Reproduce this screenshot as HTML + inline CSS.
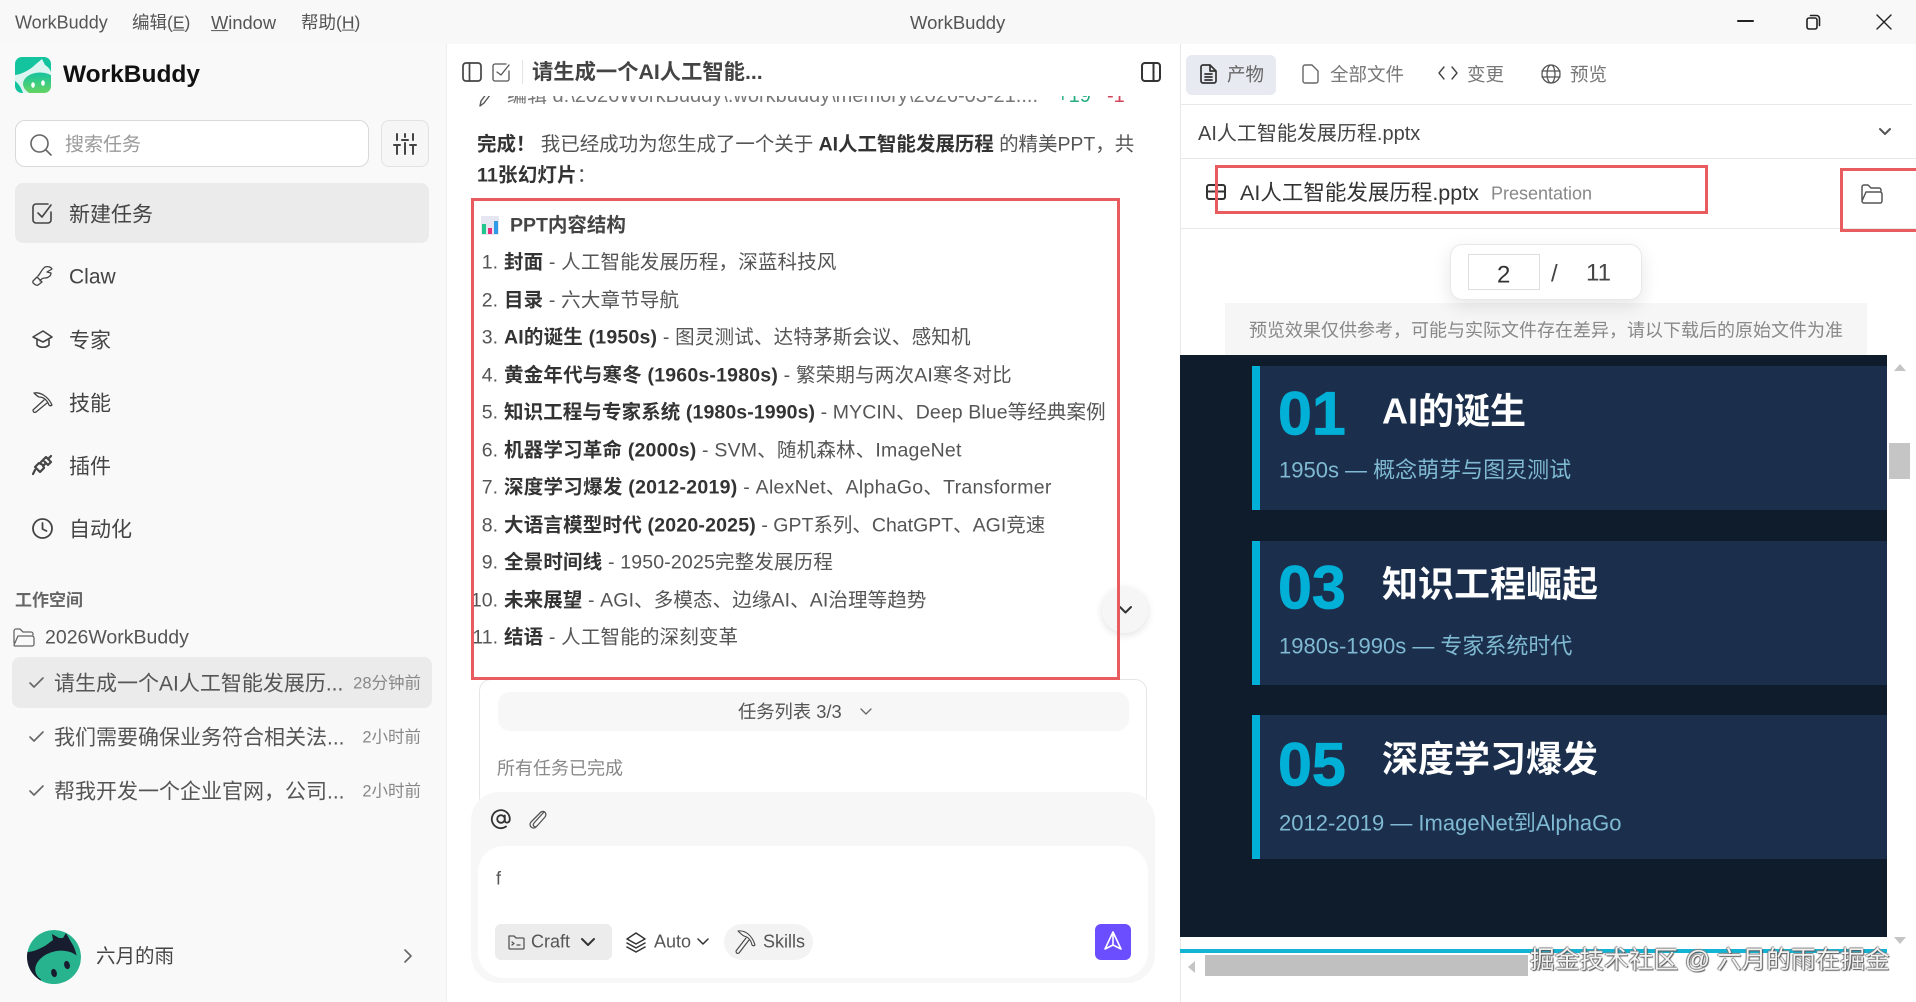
<!DOCTYPE html>
<html lang="zh"><head><meta charset="utf-8"><title>WorkBuddy</title>
<style>
*{box-sizing:border-box}
html,body{margin:0;padding:0;width:1916px;height:1002px;overflow:hidden;background:#fff}
body{position:relative;font-family:"Liberation Sans","Noto Sans CJK SC",sans-serif;color:#444}
.b{position:absolute}
.t{position:absolute;white-space:nowrap;transform:translateY(calc(-50% + 1px));line-height:1.3}
svg{position:absolute;overflow:visible;fill:none;stroke:#444;stroke-width:1.6;stroke-linecap:round;stroke-linejoin:round}
b{font-weight:700;color:#333}
.li{font-size:19.5px;color:#555;letter-spacing:.17px}
.n{position:absolute;white-space:nowrap;transform:translateY(calc(-50% + 1px));font-size:19.5px;color:#555;text-align:right;width:40px;left:458px;line-height:1.3}
.nav{font-size:21px;left:69px;color:#444}
.red{position:absolute;border:3px solid #e85c5f;z-index:5}
.card{position:absolute;left:1252px;width:635px;height:144px;background:#1b2f4d;border-left:8px solid #00b0d6}
.num{font-size:61px;font-weight:700;color:#00b0d6;left:1278px;line-height:1;-webkit-text-stroke:.8px #00b0d6}
.ttl{font-size:36px;font-weight:700;color:#fff;left:1382px}
.sub{font-size:22px;color:#7fb9d2;left:1279px}
</style></head><body>
<!-- title bar -->
<div class="b" style="left:0;top:0;width:1916px;height:44px;background:#f8f8f8"></div>
<span class="t" style="left:15px;top:22px;font-size:18px;color:#555">WorkBuddy</span>
<span class="t" style="left:132px;top:22px;font-size:17.5px;color:#555">编辑(<u>E</u>)</span>
<span class="t" style="left:211px;top:22px;font-size:18.3px;color:#555"><u>W</u>indow</span>
<span class="t" style="left:301px;top:22px;font-size:17.5px;color:#555">帮助(<u>H</u>)</span>
<span class="t" style="left:910px;top:22px;font-size:18.5px;color:#555">WorkBuddy</span>
<svg style="left:1738px;top:14px;stroke:#222;stroke-width:2" width="16" height="16"><path d="M0 7h15"/></svg>
<svg style="left:1806px;top:14px;stroke:#222" width="16" height="16"><rect x="1" y="4" width="10" height="11" rx="2"/><path d="M4.500 1.500h6a3 3 0 0 1 3 3v7"/></svg>
<svg style="left:1876px;top:14px;stroke:#222;stroke-width:1.4" width="16" height="16"><path d="M1 1l14 14M15 1L1 15"/></svg>

<!-- sidebar -->
<div class="b" style="left:0;top:44px;width:447px;height:958px;background:#f9f9f9;border-right:1px solid #eee"></div>
<svg style="left:15px;top:57px;stroke:none" width="36" height="36" viewBox="0 0 36 36">
<defs><linearGradient id="g1" x1="0" y1="0" x2="0" y2="1"><stop offset="0" stop-color="#14c4a0"/><stop offset="1" stop-color="#6fd65a"/></linearGradient>
<clipPath id="c1"><rect width="36" height="36" rx="7"/></clipPath><clipPath id="c2"><circle cx="27" cy="27" r="27"/></clipPath></defs>
<g clip-path="url(#c1)">
<rect width="36" height="36" fill="#14c49e"/>
<path d="M0 18C8 17 16 12 21 7L27 2l3 6c3 2 5 4 6 7v21H8C6 30 3 26 0 24z" fill="#def4f0"/>
<ellipse cx="25" cy="27" rx="17" ry="11.500" fill="url(#g1)"/>
<ellipse cx="18" cy="28" rx="1.800" ry="2.800" fill="#fff"/><ellipse cx="28" cy="26" rx="1.800" ry="2.800" fill="#fff"/>
</g></svg>
<span class="t" style="left:63px;top:74px;font-size:24.5px;font-weight:700;color:#111">WorkBuddy</span>
<div class="b" style="left:15px;top:120px;width:354px;height:47px;background:#fff;border:1.5px solid #d9d9d9;border-radius:10px"></div>
<svg style="left:30px;top:134px;stroke:#666" width="22" height="22"><circle cx="9.500" cy="9.500" r="8.500"/><path d="M16 16l5 5"/></svg>
<span class="t" style="left:65px;top:145px;font-size:19px;color:#9a9a9a">搜索任务</span>
<div class="b" style="left:381px;top:120px;width:48px;height:47px;background:#f6f6f6;border:1.5px solid #e2e2e2;border-radius:8px"></div>
<svg style="left:394px;top:134px;stroke:#444;stroke-width:2" width="22" height="20"><path d="M3 0v6M3 12v8M11 0v3M11 9v11M19 0v6M19 12v8M0 11h6M8 6h6M16 11h6"/></svg>
<div class="b" style="left:15px;top:183px;width:414px;height:60px;background:#ebebeb;border-radius:8px"></div>
<svg style="left:32px;top:203px" width="21" height="21"><path d="M19 9v8a3 3 0 0 1-3 3H4a3 3 0 0 1-3-3V4a3 3 0 0 1 3-3h12"/><path d="M6 10l4 4 9-12"/></svg>
<span class="t nav" style="top:214px">新建任务</span>
<svg style="left:32px;top:265px;stroke-width:1.3" width="21" height="21"><path d="M1 16l4-4 5 5-4 3c-2 1-6-2-5-4zM6 11c2-2 4-7 7-9 3-1 6 0 7 2l-5 3 4 1c0 3-3 5-6 5-2 0-4 1-5 3"/></svg>
<span class="t nav" style="top:276px">Claw</span>
<svg style="left:32px;top:329px" width="21" height="21"><path d="M11 2L1 8l10 5 9-5zM5 11v5c3 3 9 3 12 0v-5"/></svg>
<span class="t nav" style="top:340px">专家</span>
<svg style="left:32px;top:392px;stroke-width:1.3" width="21" height="21"><path d="M2 1c6-1 14 3 18 12-1 1-2 1-3 0-2-5-5-8-10-8-2-1-4-3-5-4zM12 8L1 18c0 2 1 3 3 2l11-9"/></svg>
<span class="t nav" style="top:403px">技能</span>
<svg style="left:32px;top:455px;stroke-width:2.2" width="21" height="21"><path d="M14 2l5 5-3 3-5-5zM11 10l-4-2-4 4 5 5 4-4zM3 15l-2 4M17 3l2-2M9 7l2-2M11 11l2-2"/></svg>
<span class="t nav" style="top:466px">插件</span>
<svg style="left:32px;top:518px;stroke-width:1.8" width="21" height="21"><circle cx="10.500" cy="10.500" r="9.500"/><path d="M10.500 5v6l4 2"/></svg>
<span class="t nav" style="top:529px">自动化</span>
<span class="t" style="left:15px;top:600px;font-size:17px;font-weight:700;color:#666">工作空间</span>
<svg style="left:13px;top:628px;stroke:#666;stroke-width:1.3" width="22" height="19"><path d="M1 15V3a2 2 0 0 1 2-2h4l3 3h8a2 2 0 0 1 2 2v1M5 8h14a2 2 0 0 1 2 2v6a2 2 0 0 1-2 2H2a1 1 0 0 1-1-1z"/></svg>
<span class="t" style="left:45px;top:637px;font-size:19.5px;color:#555">2026WorkBuddy</span>
<div class="b" style="left:12px;top:657px;width:420px;height:51px;background:#ebebeb;border-radius:8px"></div>
<svg style="left:29px;top:677px;stroke:#666" width="15" height="11"><path d="M1 6l4 4 9-9"/></svg>
<span class="t" style="left:54px;top:683px;font-size:21px;color:#555">请生成一个AI人工智能发展历...</span>
<span class="t" style="right:1495px;top:683px;font-size:16.5px;color:#888">28分钟前</span>
<svg style="left:29px;top:731px;stroke:#666" width="15" height="11"><path d="M1 6l4 4 9-9"/></svg>
<span class="t" style="left:54px;top:737px;font-size:21px;color:#555">我们需要确保业务符合相关法...</span>
<span class="t" style="right:1495px;top:737px;font-size:16.5px;color:#888">2小时前</span>
<svg style="left:29px;top:785px;stroke:#666" width="15" height="11"><path d="M1 6l4 4 9-9"/></svg>
<span class="t" style="left:54px;top:791px;font-size:21px;color:#555">帮我开发一个企业官网，公司...</span>
<span class="t" style="right:1495px;top:791px;font-size:16.5px;color:#888">2小时前</span>
<svg style="left:27px;top:930px;stroke:none" width="54" height="54" viewBox="0 0 54 54">
<g clip-path="url(#c2)">
<circle cx="27" cy="27" r="27" fill="#28b38f"/>
<path d="M0 22C6 22 12 19 16 17c4-2 7-5 10-7l-1-6 7 4h4l3-5 5 9c3 4 5 10 6 16v10H20L12 54H0z" fill="#171c2e"/>
<ellipse cx="31" cy="37" rx="23" ry="16" fill="#28b38f" transform="rotate(-12 31 37)"/>
<path d="M12 54l6-10 20 12z" fill="#28b38f"/>
<ellipse cx="27" cy="43" rx="2.800" ry="4.200" fill="#171c2e" transform="rotate(-15 27 43)"/><ellipse cx="40" cy="35" rx="2.800" ry="4.200" fill="#171c2e" transform="rotate(-15 40 35)"/>
</g></svg>
<span class="t" style="left:96px;top:956px;font-size:19.5px;color:#444">六月的雨</span>
<svg style="left:404px;top:949px;stroke:#666" width="8" height="14"><path d="M1 1l6 6-6 6"/></svg>

<!-- middle -->
<span class="t" style="left:507px;top:95px;font-size:20px;color:#777">编辑 d:\2026WorkBuddy\.workbuddy\memory\2026-03-21....</span>
<span class="t" style="left:1057px;top:95px;font-size:20px;color:#27ae80">+19</span>
<span class="t" style="left:1107px;top:95px;font-size:20px;color:#d0455a">-1</span>
<svg style="left:478px;top:92px;stroke:#555;stroke-width:1.4" width="13" height="16"><path d="M2 14l1-5L9 1l3 2-6 8z"/></svg>
<div class="b" style="left:470px;top:84px;width:700px;height:12px;background:#fff"></div>
<svg style="left:462px;top:62px;stroke:#444;stroke-width:1.7" width="20" height="20"><rect x="1" y="1" width="18" height="18" rx="3"/><path d="M7.500 1v18"/></svg>
<svg style="left:492px;top:63px;stroke:#555;stroke-width:1.3" width="19" height="19"><path d="M17 8v8a2 2 0 0 1-2 2H3a2 2 0 0 1-2-2V3a2 2 0 0 1 2-2h11"/><path d="M5 9l4 3 8-10"/></svg>
<div class="b" style="left:522px;top:60px;width:1px;height:24px;background:#e4e4e4"></div>
<span class="t" style="left:532px;top:72px;font-size:21.3px;font-weight:700;color:#444">请生成一个AI人工智能...</span>
<svg style="left:1141px;top:62px;stroke:#333;stroke-width:2" width="20" height="20"><rect x="1" y="1" width="18" height="18" rx="3"/><path d="M12.500 1v18"/></svg>
<span class="t" style="left:477px;top:144px;font-size:19.5px;color:#555;letter-spacing:-.04px"><b>完成！</b>&nbsp;我已经成功为您生成了一个关于 <b>AI人工智能发展历程</b> 的精美PPT，共</span>
<span class="t" style="left:477px;top:175px;font-size:19.5px;color:#555;letter-spacing:.2px"><b>11张幻灯片</b>：</span>
<div class="red" style="left:471px;top:198px;width:649px;height:482px"></div>
<svg style="left:481px;top:216px;stroke:none" width="18" height="19"><rect width="18" height="19" rx="1" fill="#e6e6f2"/><rect x="1" y="8" width="4" height="10" fill="#1fc78b"/><rect x="7" y="12" width="4" height="6" fill="#ec2f78"/><rect x="13" y="5" width="4" height="13" fill="#2f9be8"/></svg>
<span class="t" style="left:510px;top:225px;font-size:19.5px;font-weight:700;color:#444">PPT内容结构</span>

<span class="n" style="top:262px">1.</span><span class="t li" style="left:504px;top:262px"><b>封面</b> - 人工智能发展历程，深蓝科技风</span>
<span class="n" style="top:300px">2.</span><span class="t li" style="left:504px;top:300px"><b>目录</b> - 六大章节导航</span>
<span class="n" style="top:337px">3.</span><span class="t li" style="left:504px;top:337px;letter-spacing:.2px"><b>AI的诞生 (1950s)</b> - 图灵测试、达特茅斯会议、感知机</span>
<span class="n" style="top:375px">4.</span><span class="t li" style="left:504px;top:375px;letter-spacing:.2px"><b>黄金年代与寒冬 (1960s-1980s)</b> - 繁荣期与两次AI寒冬对比</span>
<span class="n" style="top:412px">5.</span><span class="t li" style="left:504px;top:412px;letter-spacing:.1px"><b>知识工程与专家系统 (1980s-1990s)</b> - MYCIN、Deep Blue等经典案例</span>
<span class="n" style="top:450px">6.</span><span class="t li" style="left:504px;top:450px;letter-spacing:.2px"><b>机器学习革命 (2000s)</b> - SVM、随机森林、ImageNet</span>
<span class="n" style="top:487px">7.</span><span class="t li" style="left:504px;top:487px;letter-spacing:.27px"><b>深度学习爆发 (2012-2019)</b> - AlexNet、AlphaGo、Transformer</span>
<span class="n" style="top:525px">8.</span><span class="t li" style="left:504px;top:525px;letter-spacing:0"><b style="letter-spacing:.2px">大语言模型时代 (2020-2025)</b> - GPT系列、ChatGPT、AGI竞速</span>
<span class="n" style="top:562px">9.</span><span class="t li" style="left:504px;top:562px"><b>全景时间线</b> - 1950-2025完整发展历程</span>
<span class="n" style="top:600px">10.</span><span class="t li" style="left:504px;top:600px;letter-spacing:.12px"><b>未来展望</b> - AGI、多模态、边缘AI、AI治理等趋势</span>
<span class="n" style="top:637px">11.</span><span class="t li" style="left:504px;top:637px"><b>结语</b> - 人工智能的深刻变革</span>

<div class="b" style="left:1102px;top:587px;width:46px;height:46px;border-radius:50%;background:#f6f6f6;box-shadow:0 2px 8px rgba(0,0,0,.12)"></div>
<svg style="left:1119px;top:606px;stroke:#333;stroke-width:2" width="13" height="8"><path d="M1 1l5.500 5.500L12 1"/></svg>

<div class="b" style="left:479px;top:679px;width:668px;height:130px;border:1px solid #e6e6e6;border-radius:12px;background:#fff"></div>
<div class="b" style="left:498px;top:692px;width:631px;height:39px;background:#f7f7f7;border-radius:12px"></div>
<span class="t" style="left:738px;top:711px;font-size:18.3px;color:#555">任务列表 3/3</span>
<svg style="left:860px;top:708px;stroke:#666;stroke-width:1.3" width="12" height="7"><path d="M1 1l5 5 5-5"/></svg>
<span class="t" style="left:497px;top:768px;font-size:18px;color:#888">所有任务已完成</span>

<div class="b" style="left:471px;top:792px;width:684px;height:191px;background:#f7f7f7;border-radius:28px"></div>
<svg style="left:491px;top:809px;stroke:#333;stroke-width:1.8" width="20" height="20"><circle cx="10" cy="10" r="3.800"/><path d="M13.800 6.500v5c0 3 5 3 5-1.500A9 9 0 1 0 15 17.500"/></svg>
<svg style="left:528px;top:809px;stroke:#555;stroke-width:1.3" width="18" height="20"><path d="M16 3L6 14c-2 3 1 5 3 3L17 8c2-3 0-7-4-5L3 13c-3 4 2 8 5 5"/></svg>
<div class="b" style="left:478px;top:846px;width:670px;height:132px;background:#fff;border-radius:26px"></div>
<span class="t" style="left:496px;top:878px;font-size:18px;color:#555">f</span>
<div class="b" style="left:495px;top:924px;width:117px;height:36px;background:#ececec;border-radius:6px"></div>
<svg style="left:508px;top:934px;stroke:#555;stroke-width:1.3" width="17" height="16"><path d="M1 13V2h5l2 2h7a1 1 0 0 1 1 1v9a1 1 0 0 1-1 1H2a1 1 0 0 1-1-1zM4 8l2 1.500L4 11M9 11h3"/></svg>
<span class="t" style="left:531px;top:941px;font-size:18px;color:#555">Craft</span>
<svg style="left:581px;top:938px;stroke:#333;stroke-width:2" width="14" height="9"><path d="M1 1l6 6 6-6"/></svg>
<svg style="left:626px;top:932px;stroke:#333;stroke-width:1.5" width="21" height="20"><path d="M10 1l9 6-9 5-9-5zM1 11l9 5 9-5M1 15l9 5 9-5"/></svg>
<span class="t" style="left:654px;top:941px;font-size:18px;color:#555">Auto</span>
<svg style="left:697px;top:938px;stroke:#333;stroke-width:1.5" width="12" height="8"><path d="M1 1l5 5 5-5"/></svg>
<div class="b" style="left:724px;top:924px;width:89px;height:36px;background:#f3f3f3;border-radius:18px"></div>
<svg style="left:735px;top:930px;stroke:#444;stroke-width:1.1" width="22" height="24"><path d="M3 1c7-1 14 4 17 14-1 1-2 1-3 0-1-5-4-8-8-9-2-1-4-3-6-5zM11 8L1 21c0 2 1 3 3 2L14 10"/></svg>
<span class="t" style="left:763px;top:941px;font-size:18px;color:#555">Skills</span>
<div class="b" style="left:1095px;top:924px;width:36px;height:36px;background:#6b4eff;border-radius:6px"></div>
<svg style="left:1103px;top:931px;stroke:#fff;stroke-width:1.6" width="20" height="20"><path d="M10 1L2 18l8-4 8 4zM10 1v13"/></svg>

<!-- right -->
<div class="b" style="left:1180px;top:44px;width:1px;height:958px;background:#e8e8e8"></div>
<div class="b" style="left:1186px;top:55px;width:90px;height:40px;background:#e8eaf2;border-radius:6px"></div>
<svg style="left:1200px;top:64px;stroke:#333;stroke-width:1.7" width="17" height="20"><path d="M10 1H3a2 2 0 0 0-2 2v14a2 2 0 0 0 2 2h11a2 2 0 0 0 2-2V7zM10 1v6h6M5 10h7M5 13h7M5 16h7"/></svg>
<span class="t" style="left:1227px;top:74px;font-size:18.5px;color:#666">产物</span>
<svg style="left:1302px;top:64px;stroke:#666;stroke-width:1.4" width="17" height="20"><path d="M10 1H3a2 2 0 0 0-2 2v14a2 2 0 0 0 2 2h11a2 2 0 0 0 2-2V7zM10 1l6 6"/></svg>
<span class="t" style="left:1330px;top:74px;font-size:18.5px;color:#777">全部文件</span>
<svg style="left:1438px;top:65px;stroke:#444;stroke-width:1.4" width="20" height="16"><path d="M6 2L1 8l5 6M14 2l5 6-5 6"/></svg>
<span class="t" style="left:1467px;top:74px;font-size:18.5px;color:#777">变更</span>
<svg style="left:1541px;top:64px;stroke:#555;stroke-width:1.3" width="20" height="20"><circle cx="10" cy="10" r="9"/><ellipse cx="10" cy="10" rx="4" ry="9"/><path d="M1 7h18M1 13h18"/></svg>
<span class="t" style="left:1570px;top:74px;font-size:18.5px;color:#777">预览</span>
<div class="b" style="left:1180px;top:104px;width:732px;height:1px;background:#e8e8e8"></div>
<span class="t" style="left:1198px;top:133px;font-size:20px;color:#444">AI人工智能发展历程.pptx</span>
<svg style="left:1879px;top:128px;stroke:#555;stroke-width:2" width="12" height="8"><path d="M1 1l5 5 5-5"/></svg>
<div class="b" style="left:1180px;top:158px;width:736px;height:1px;background:#e8e8e8"></div>
<svg style="left:1206px;top:184px;stroke:#333;stroke-width:2" width="20" height="16"><rect x="1" y="1" width="18" height="14" rx="2"/><path d="M1 7.500h18M10 1v6.500"/></svg>
<span class="t" style="left:1240px;top:193px;font-size:21.5px;color:#333">AI人工智能发展历程.pptx</span>
<span class="t" style="left:1491px;top:193px;font-size:18px;color:#888">Presentation</span>
<div class="b" style="left:1180px;top:228px;width:736px;height:1px;background:#e8e8e8"></div>
<div class="red" style="left:1215px;top:165px;width:493px;height:49px"></div>
<div class="red" style="left:1840px;top:168px;width:80px;height:64px"></div>
<svg style="left:1861px;top:184px;stroke:#555;stroke-width:1.5" width="22" height="20"><path d="M1 16V3a2 2 0 0 1 2-2h4l3 3h8a2 2 0 0 1 2 2v1M5 8h14a2 2 0 0 1 2 2v7a2 2 0 0 1-2 2H3a2 2 0 0 1-2-2z"/></svg>

<div class="b" style="left:1225px;top:303px;width:642px;height:52px;background:#f6f6f6"></div>
<span class="t" style="left:1249px;top:330px;font-size:18px;color:#888">预览效果仅供参考，可能与实际文件存在差异，请以下载后的原始文件为准</span>
<div class="b" style="left:1450px;top:244px;width:192px;height:56px;background:#fff;border:1px solid #e8e8e8;border-radius:12px;box-shadow:0 6px 18px rgba(0,0,0,.1)"></div>
<div class="b" style="left:1468px;top:254px;width:72px;height:36px;border:1px solid #ddd"></div>
<span class="t" style="left:1497px;top:274px;font-size:24px;color:#333">2</span>
<span class="t" style="left:1551px;top:273px;font-size:24px;color:#444">/</span>
<span class="t" style="left:1586px;top:272px;font-size:24px;color:#444">11</span>

<div class="b" style="left:1180px;top:355px;width:707px;height:582px;background:#0f1c2b"></div>
<div class="card" style="top:366px"></div>
<span class="t num" style="top:413px">01</span>
<span class="t ttl" style="top:411px">AI的诞生</span>
<span class="t sub" style="top:470px">1950s — 概念萌芽与图灵测试</span>
<div class="card" style="top:541px"></div>
<span class="t num" style="top:587px">03</span>
<span class="t ttl" style="top:584px">知识工程崛起</span>
<span class="t sub" style="top:646px">1980s-1990s — 专家系统时代</span>
<div class="card" style="top:715px"></div>
<span class="t num" style="top:764px">05</span>
<span class="t ttl" style="top:759px">深度学习爆发</span>
<span class="t sub" style="top:823px">2012-2019 — ImageNet到AlphaGo</span>

<div class="b" style="left:1180px;top:949px;width:707px;height:4px;background:#12b3d3"></div>
<div class="b" style="left:1894px;top:364px;width:0;height:0;border-left:6px solid transparent;border-right:6px solid transparent;border-bottom:7px solid #c4c4c4"></div>
<div class="b" style="left:1889px;top:443px;width:21px;height:36px;background:#c5c5c5"></div>
<div class="b" style="left:1894px;top:937px;width:0;height:0;border-left:6px solid transparent;border-right:6px solid transparent;border-top:7px solid #c4c4c4"></div>
<div class="b" style="left:1188px;top:961px;width:0;height:0;border-top:6px solid transparent;border-bottom:6px solid transparent;border-right:7px solid #c4c4c4"></div>
<div class="b" style="left:1205px;top:955px;width:323px;height:21px;background:#c0c0c0"></div>
<span class="t" style="left:1530px;top:960px;font-size:24.7px;color:#f2f2f2;text-shadow:1px 1px 1px #555,-1px 0 1px #777,0 -1px 1px #888;z-index:6">掘金技术社区 @ 六月的雨在掘金</span>
</body></html>
